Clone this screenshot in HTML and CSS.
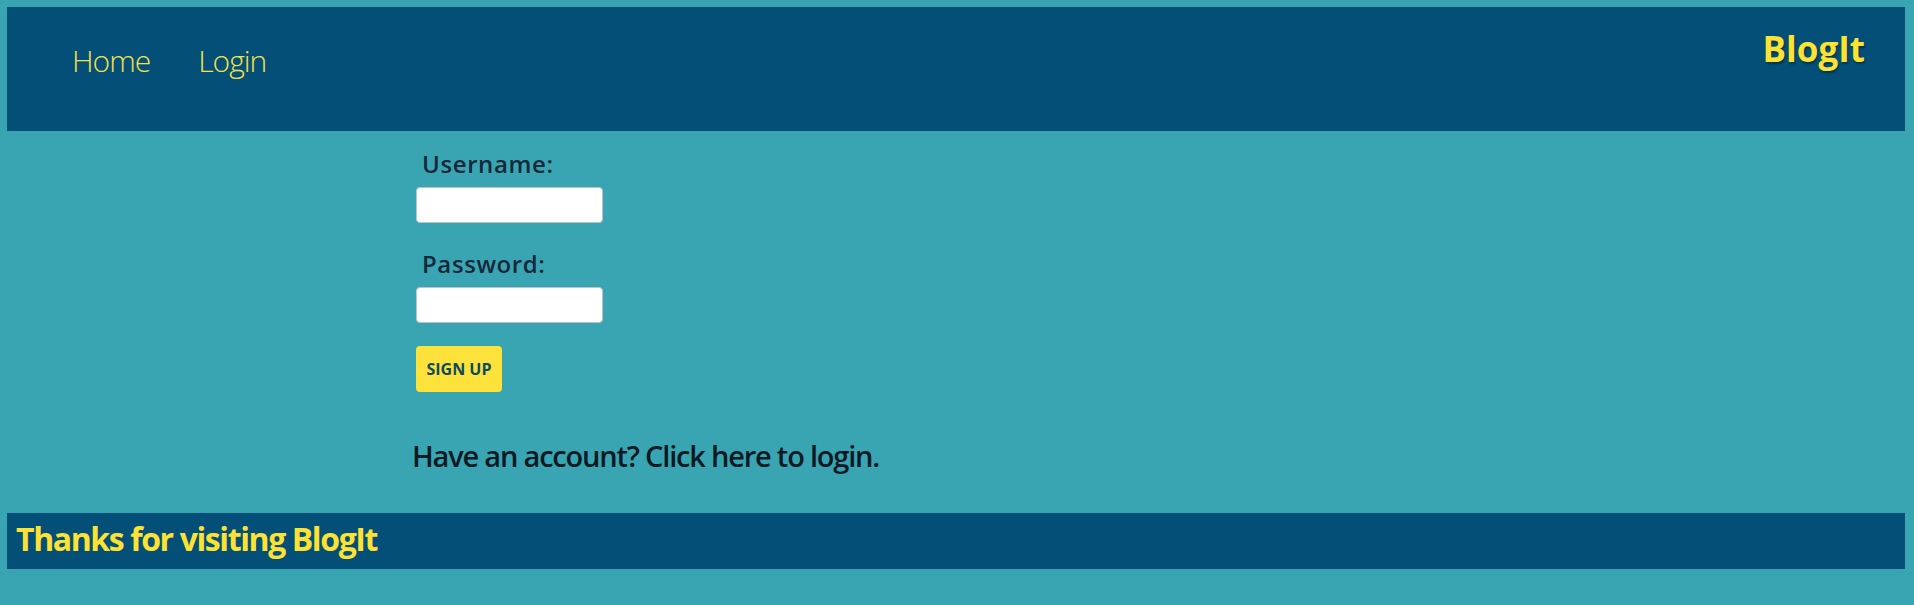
FILE: index.html
```html
<!DOCTYPE html>
<html lang="en">
<head>
<meta charset="utf-8">
<title>BlogIt</title>
<link rel="stylesheet" href="styles.css">
</head>
<body>
<header class="site-header">
  <nav class="nav">
    <a class="nav-link" href="#">Home</a>
    <a class="nav-link" href="#">Login</a>
  </nav>
  <div class="brand">BlogIt</div>
</header>
<main class="content">
  <form class="signup-form">
    <label class="field-label" for="username">Username:</label>
    <input class="field-input" id="username" type="text">
    <label class="field-label field-label-2" for="password">Password:</label>
    <input class="field-input" id="password" type="password">
    <button class="btn" type="button">SIGN UP</button>
  </form>
  <p class="account-note">Have an account? Click here to login.</p>
</main>
<footer class="site-footer">
  <h2 class="footer-title">Thanks for visiting BlogIt</h2>
</footer>
</body>
</html>
```
FILE: styles.css
```css
html, body {
  margin: 0;
  padding: 0;
}
body {
  background: #3aa5b2;
  padding: 7px 9px 0 7px;
  height: 605px;
  box-sizing: border-box;
  font-family: "Open Sans", "Noto Sans", sans-serif;
}
.site-header {
  background: #034f77;
  height: 124px;
  display: flex;
  justify-content: space-between;
  align-items: flex-start;
  padding: 0 40px 0 65px;
  box-sizing: border-box;
}
.nav {
  display: flex;
  gap: 48px;
  margin-top: 39px;
}
.nav-link {
  color: #f4e04a;
  text-decoration: none;
  font-weight: 300;
  font-size: 30px;
  line-height: 30px;
  letter-spacing: -1px;
}
.brand {
  margin-top: 24px;
  color: #fde233;
  font-weight: 700;
  font-size: 35px;
  line-height: 35px;
  letter-spacing: 0;
  text-shadow: 1px 2px 2px rgba(0,0,0,0.35);
}
.content {
  padding-left: 409px;
}
.signup-form {
  display: flex;
  flex-direction: column;
  align-items: flex-start;
  padding-top: 21px;
}
.field-label {
  color: #16283a;
  font-size: 24px;
  line-height: 24px;
  font-weight: 600;
  letter-spacing: 0.6px;
  margin-left: 6px;
  margin-bottom: 11px;
}
.field-label-2 {
  margin-top: 29px;
}
.field-input {
  width: 187px;
  height: 36px;
  box-sizing: border-box;
  border: 1px solid #b9c4c8;
  border-radius: 4px;
  background: #ffffff;
  margin: 0;
}
.btn {
  margin-top: 23px;
  width: 86px;
  height: 46px;
  border: none;
  border-radius: 4px;
  background: #fde23c;
  color: #0d4a5a;
  font-family: "Open Sans", "Noto Sans", sans-serif;
  font-weight: 700;
  font-size: 16px;
  padding: 0;
}
.account-note {
  margin: 49px 0 0 -4px;
  color: #0a1a24;
  font-size: 29px;
  line-height: 29px;
  font-weight: 600;
  letter-spacing: -1.2px;
}
.site-footer {
  margin-top: 43px;
  background: #034f77;
  height: 56px;
  padding: 9px 9px 0;
  box-sizing: border-box;
}
.footer-title {
  margin: 0;
  color: #fde233;
  font-size: 32px;
  line-height: 33px;
  font-weight: 700;
  letter-spacing: -1.4px;
}
```
